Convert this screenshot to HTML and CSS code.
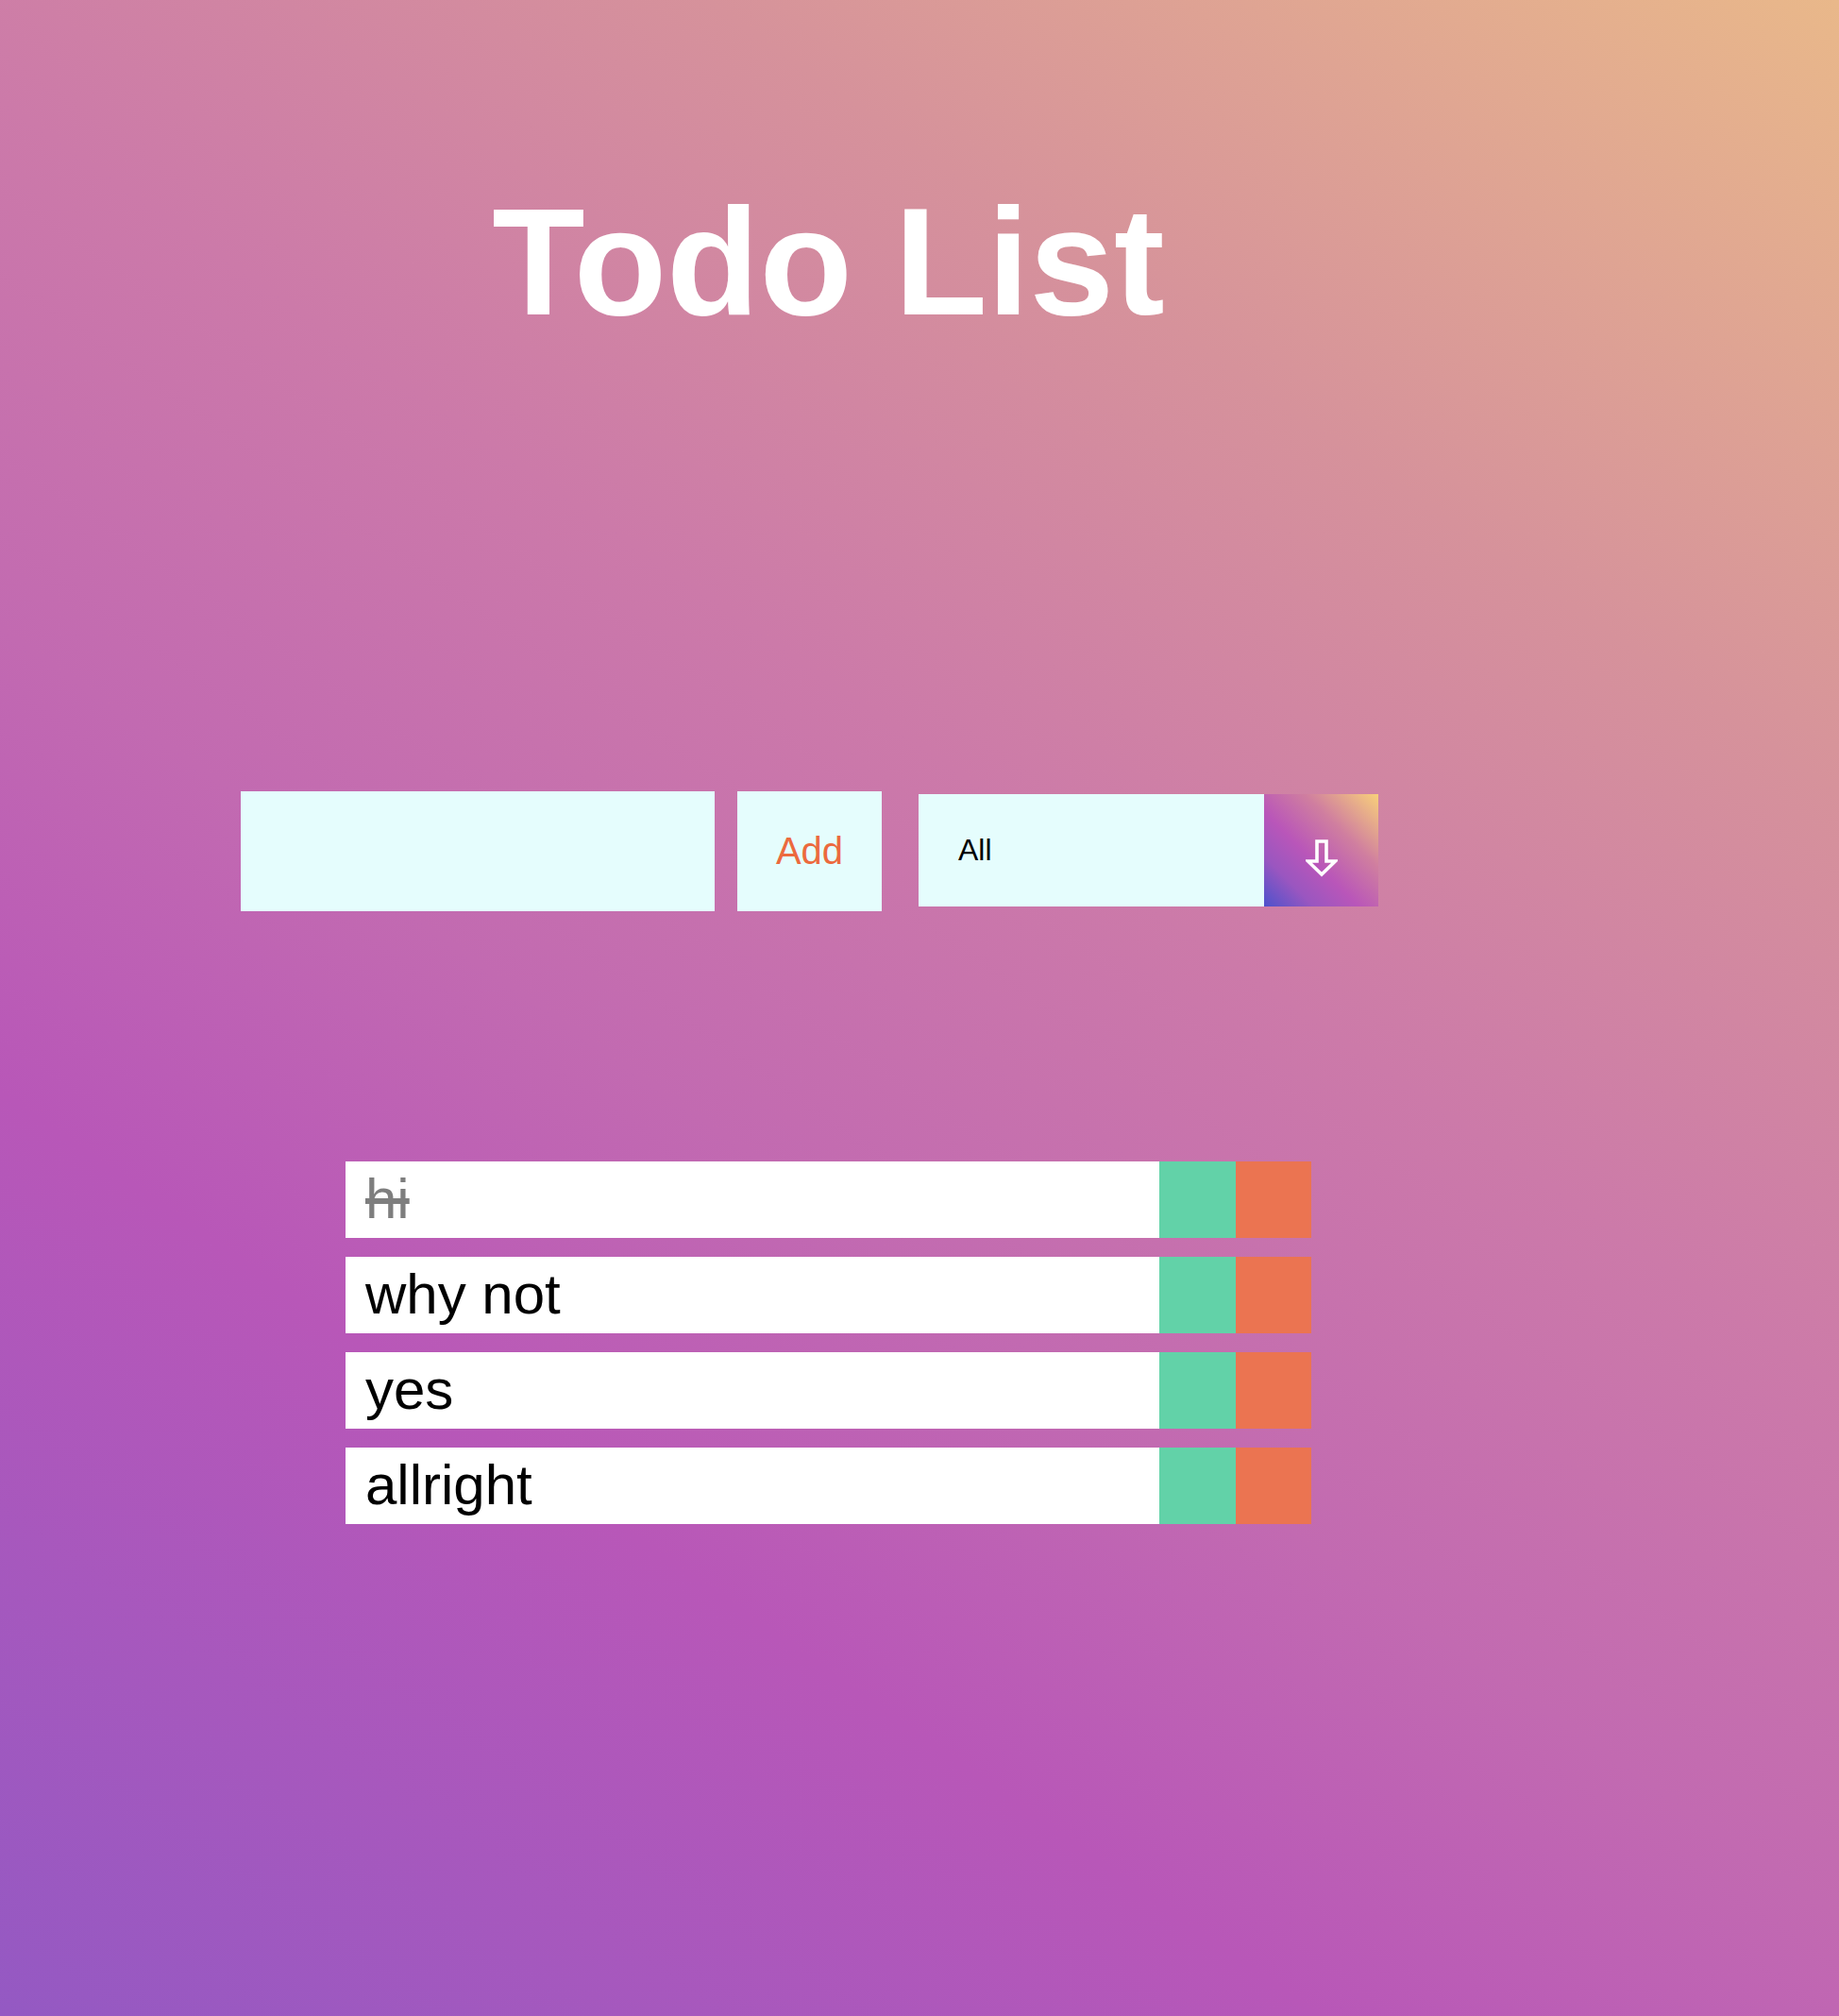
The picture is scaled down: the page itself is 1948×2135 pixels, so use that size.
FILE: index.html
```html
<!DOCTYPE html>
<html lang="en">
<head>
<meta charset="utf-8">
<title>Todo List</title>
<link rel="stylesheet" href="styles.css">
</head>
<body>
<div class="app">
  <header class="header">
    <h1 class="title">Todo List</h1>
  </header>
  <form class="todo-form">
    <input class="todo-input" type="text" aria-label="New todo">
    <button class="add-btn" type="button">Add</button>
    <div class="select">
      <span class="select-value">All</span>
      <span class="select-arrow">
        <svg class="arrow-icon" viewBox="0 0 34 40" width="34" height="40" aria-hidden="true">
          <path d="M12 2 H22 V23 H31.5 L17 37 L2.5 23 H12 Z" fill="none" stroke="#ffffff" stroke-width="3.6" stroke-linejoin="miter"/>
        </svg>
      </span>
    </div>
  </form>
  <ul class="todo-list">
    <li class="todo-item done"><span class="todo-text">hi</span><button class="btn-check" type="button"></button><button class="btn-trash" type="button"></button></li>
    <li class="todo-item"><span class="todo-text">why not</span><button class="btn-check" type="button"></button><button class="btn-trash" type="button"></button></li>
    <li class="todo-item"><span class="todo-text">yes</span><button class="btn-check" type="button"></button><button class="btn-trash" type="button"></button></li>
    <li class="todo-item"><span class="todo-text">allright</span><button class="btn-check" type="button"></button><button class="btn-trash" type="button"></button></li>
  </ul>
</div>
</body>
</html>
```

FILE: styles.css
```css
* {
  box-sizing: border-box;
}

html, body {
  margin: 0;
  padding: 0;
}

body {
  min-height: 100vh;
  font-family: "Liberation Sans", Arial, Helvetica, sans-serif;
  background-image: linear-gradient(35deg, #9459c3 0%, #b857b8 28%, #c26ab1 42%, #cc7aa9 58%, #d6929b 76%, #e9b88a 100%);
  background-attachment: fixed;
}

.app {
  width: 1755px;
}

.header {
  display: flex;
  justify-content: center;
  padding-top: 185px;
}

.title {
  margin: 0;
  font-size: 161px;
  font-weight: 700;
  color: #ffffff;
  line-height: 184px;
}

.todo-form {
  display: flex;
  align-items: center;
  justify-content: center;
  padding-right: 40px;
  margin-top: 469px;
}

.todo-input {
  width: 502px;
  height: 127px;
  border: none;
  outline: none;
  background: #e5fdfd;
  padding: 0 20px;
  font-size: 40px;
  font-family: inherit;
}

.add-btn {
  width: 153px;
  height: 127px;
  margin-left: 24px;
  border: none;
  background: #e5fdfd;
  color: #ec6a3e;
  font-family: inherit;
  font-size: 40px;
  padding: 0;
}

.select {
  display: flex;
  width: 487px;
  height: 119px;
  margin-left: 39px;
  margin-bottom: 2px;
  background: #e5fdfd;
}

.select-value {
  flex: 1;
  display: flex;
  align-items: center;
  padding-left: 42px;
  font-size: 32px;
  color: #000000;
}

.select-arrow {
  width: 121px;
  display: flex;
  align-items: center;
  justify-content: center;
  padding-top: 16px;
  padding-left: 1px;
  background-image: linear-gradient(45deg, #4c52cc 0%, #9a56c0 22%, #b956b9 42%, #d07f9f 68%, #f8d07a 100%);
}

.arrow-icon {
  display: block;
}

.todo-list {
  list-style: none;
  margin: 265px auto 0;
  padding: 0;
  width: 1023px;
  display: flex;
  flex-direction: column;
  gap: 20px;
}

.todo-item {
  display: flex;
  height: 81px;
  background: #ffffff;
}

.todo-text {
  flex: 1;
  display: flex;
  align-items: center;
  padding-left: 21px;
  padding-bottom: 2px;
  font-size: 60px;
  color: #000000;
}

.done .todo-text {
  text-decoration: line-through;
  opacity: 0.5;
}

.btn-check,
.btn-trash {
  width: 81px;
  height: 81px;
  border: none;
  padding: 0;
}

.btn-check {
  background: #62d2a8;
}

.btn-trash {
  background: #eb7451;
  width: 80px;
}
```
